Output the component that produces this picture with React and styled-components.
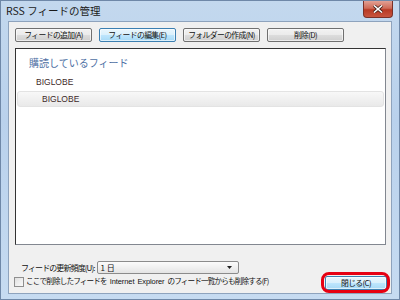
import React from "react";
import styled, { createGlobalStyle } from "styled-components";

const Global = createGlobalStyle`
  html, body { margin: 0; padding: 0; background: #fff; }
  body { font-family: "Noto Sans CJK JP", "Noto Sans", sans-serif; }
`;

const Window = styled.div`
  width: 400px;
  height: 300px;
  box-sizing: border-box;
  display: flex;
  flex-direction: column;
  padding: 0 7px 7px 7px;
  background: linear-gradient(180deg, #c3d8ee 0%, #b9d1ec 40%, #c6dbf1 100%);
  border: 1px solid #6f88a8;
  overflow: hidden;
`;

const TitleBar = styled.div`
  height: 20px;
  flex: none;
  display: flex;
  align-items: flex-start;
  justify-content: space-between;
  margin: 0 -7px 0 -3px;
  padding-right: 6px;
`;

const Title = styled.span`
  font-size: 10.5px;
  line-height: 20px;
  color: #1a1a1a;
  padding-left: 1px;
`;

const CloseX = styled.div`
  width: 30px;
  height: 17px;
  box-sizing: border-box;
  border: 1px solid #7a3128;
  border-top: none;
  border-radius: 0 0 4px 4px;
  background: linear-gradient(180deg, #e2a194 0%, #cf6b57 45%, #b83a24 55%, #c8553f 100%);
  display: flex;
  align-items: center;
  justify-content: center;
  svg { display: block; }
`;

const Client = styled.div`
  flex: 1;
  background: #f0f0f0;
  border: 1px solid #8ea3bd;
  display: flex;
  flex-direction: column;
  padding: 6px 4px 5px 5px;
  box-sizing: border-box;
`;

const Toolbar = styled.div`
  display: flex;
  gap: 7px;
  padding-left: 1px;
`;

const Button = styled.button`
  width: ${(p) => p.$w || 77}px;
  height: 14px;
  padding: 0;
  margin: 0;
  box-sizing: border-box;
  border: 1px solid ${(p) => (p.$active ? "#3c7fb1" : "#707070")};
  border-radius: 2px;
  background: ${(p) =>
    p.$active
      ? "linear-gradient(180deg, #eaf6fd 0%, #d9f0fc 50%, #bee6fd 51%, #a7d9f5 100%)"
      : "linear-gradient(180deg, #f2f2f2 0%, #ebebeb 50%, #dddddd 51%, #cfcfcf 100%)"};
  box-shadow: inset 0 0 0 1px rgba(255, 255, 255, 0.6);
  font-family: "Noto Sans CJK JP", sans-serif;
  font-size: 7.8px;
  line-height: 12px;
  letter-spacing: -0.6px;
  color: #111;
  white-space: nowrap;
  position: relative;
`;

const Ring = styled.span`
  position: absolute;
  left: -5px;
  top: -5px;
  right: -4px;
  bottom: -4px;
  border: 3px solid #e60012;
  border-radius: 8px;
  pointer-events: none;
`;

const ListBox = styled.div`
  margin: 6px 1px 0 1px;
  height: 197px;
  flex: none;
  background: #fff;
  border: 1px solid #828790;
  border-top-color: #333;
  border-left-color: #333;
  box-sizing: border-box;
  padding: 1px 1px;
`;

const Heading = styled.div`
  font-size: 10px;
  color: #4d6fa3;
  padding: 6px 0 0 12px;
  line-height: 14px;
`;

const Item = styled.div`
  font-family: "Liberation Sans", Arial, sans-serif;
  font-size: 8.5px;
  line-height: ${(p) => (p.$selected ? 14 : 12)}px;
  color: #3d2a2a;
  padding-left: ${(p) => p.$indent}px;
  margin-top: ${(p) => (p.$selected ? 2 : 5)}px;
  border-radius: 3px;
  border: 1px solid ${(p) => (p.$selected ? "#e3e3e3" : "transparent")};
  background: ${(p) =>
    p.$selected ? "linear-gradient(180deg, #f8f8f8 0%, #e9e9e9 100%)" : "transparent"};
`;

const Bottom = styled.div`
  display: flex;
  align-items: flex-end;
  justify-content: space-between;
  margin-top: 16px;
`;

const Options = styled.div`
  display: flex;
  flex-direction: column;
  gap: 1px;
`;

const FreqRow = styled.div`
  display: flex;
  align-items: center;
  padding-left: 7px;
  gap: 2px;
`;

const Label = styled.span`
  font-size: ${(p) => (p.$small ? 7.6 : 8)}px;
  letter-spacing: ${(p) => (p.$small ? -0.85 : -0.9)}px;
  color: #111;
  line-height: 12px;
  white-space: nowrap;
`;

const Latin = styled.span`
  font-family: "Liberation Sans", Arial, sans-serif;
  font-size: 7.5px;
  letter-spacing: -0.1px;
  word-spacing: 1px;
`;

const Select = styled.div`
  width: 142px;
  height: 13px;
  box-sizing: border-box;
  border: 1px solid #8b8b8b;
  border-radius: 2px;
  background: linear-gradient(180deg, #fbfbfb 0%, #f0f0f0 50%, #e4e4e4 100%);
  display: flex;
  align-items: center;
  justify-content: space-between;
  padding: 0 6px 0 3px;
  font-size: 8px;
  color: #111;
`;

const CheckRow = styled.label`
  display: flex;
  align-items: center;
  gap: 2px;
`;

const Box = styled.span`
  width: 8px;
  height: 8px;
  border: 1px solid #8f8f8f;
  background: linear-gradient(135deg, #e0e0e0, #fafafa);
  flex: none;
`;

const CloseWrap = styled.div`
  margin-bottom: -3px;
`;

export default function App() {
  return (
    <>
      <Global />
      <Window>
        <TitleBar>
          <Title>RSS フィードの管理</Title>
          <CloseX>
            <svg width="10" height="8" viewBox="0 0 10 8">
              <path d="M1 0.5 L9 7.5 M9 0.5 L1 7.5" stroke="#3a1a14" strokeWidth="3" />
              <path d="M1 0.5 L9 7.5 M9 0.5 L1 7.5" stroke="#fff" strokeWidth="1.6" />
            </svg>
          </CloseX>
        </TitleBar>
        <Client>
          <Toolbar>
            <Button>フィードの追加(A)</Button>
            <Button $active>フィードの編集(E)</Button>
            <Button>フォルダーの作成(N)</Button>
            <Button>削除(D)</Button>
          </Toolbar>
          <ListBox>
            <Heading>購読しているフィード</Heading>
            <Item $indent={18}>BIGLOBE</Item>
            <Item $indent={24} $selected>
              BIGLOBE
            </Item>
          </ListBox>
          <Bottom>
            <Options>
              <FreqRow>
                <Label>フィードの更新頻度(U):</Label>
                <Select>
                  <span>1 日</span>
                  <svg width="5" height="3" viewBox="0 0 5 3">
                    <path d="M0 0 H5 L2.5 3 Z" fill="#222" />
                  </svg>
                </Select>
              </FreqRow>
              <CheckRow>
                <Box />
                <Label $small>
                  ここで削除したフィードを<Latin> Internet Explorer </Latin>のフィード一覧からも削除する(F)
                </Label>
              </CheckRow>
            </Options>
            <CloseWrap>
              <Button $w={62} $active>
                閉じる(C)
                <Ring />
              </Button>
            </CloseWrap>
          </Bottom>
        </Client>
      </Window>
    </>
  );
}
